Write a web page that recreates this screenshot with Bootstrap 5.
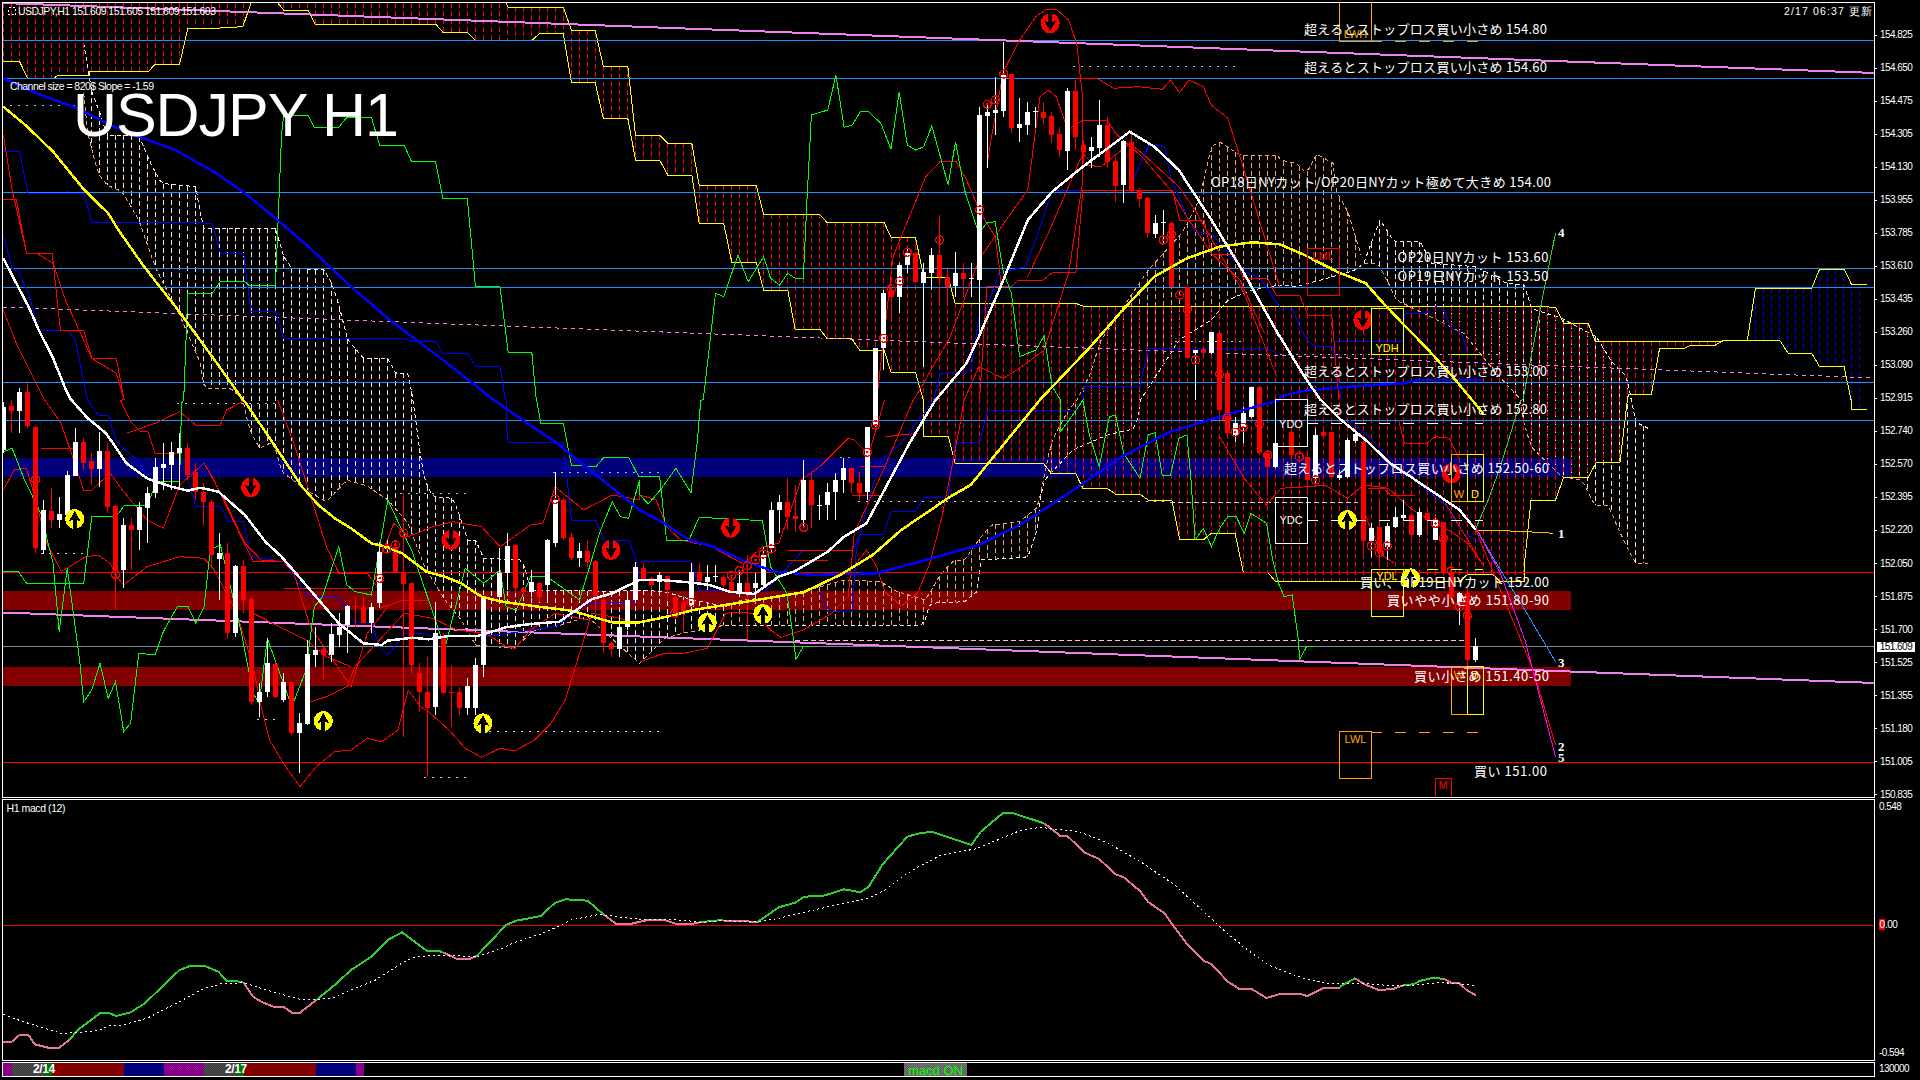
<!DOCTYPE html>
<html lang="ja">
<head>
<meta charset="UTF-8">
<title>USDJPY H1</title>
<link rel="stylesheet" href="https://cdn.jsdelivr.net/npm/bootstrap@5.3.0/dist/css/bootstrap.min.css">
<style>
html, body { height: 1080px; overflow: hidden; background: #000; }
body { margin: 0; font-family: "Liberation Sans", sans-serif; }
.term { width: 1920px; height: 1080px; padding: 2px 0 0 2px; gap: 1px; }
.pane-main { width: 1873px; height: 796px; }
.pane-macd { width: 1873px; height: 262px; }
.pane-bar { width: 1873px; height: 15px; }
.pane-main svg, .pane-macd svg { display: block; shape-rendering: crispEdges; }
.axis-col { width: 45px; font-size: 10px; letter-spacing: -.55px; line-height: 12px; color: #fff; }
.axis-main { height: 772px; margin-top: 27px; margin-bottom: -3px; }
.axis-macd { height: 258px; margin-top: 2px; }
.axis-bar { height: 12px; margin-top: 1px; }
.axis-item { height: 12px; gap: 3px; }
.axis-main .axis-item::before { content: ""; width: 2px; height: 1px; background: #fff; }
.axis-mid { margin-bottom: 10px; }
.zero-mark { background: #f00; padding: 0 .5px; }
.price-tag { left: 2px; top: 613px; width: 38px; height: 10px; background: #fff; color: #000; line-height: 10px; text-align: center; }
.seg { height: 13px; flex: none; }
.seg-purple { background: repeating-conic-gradient(#a000a0 0 25%, #700070 0 50%) 0 0 / 2px 2px; }
.seg-gray { background: repeating-conic-gradient(#505050 0 25%, #383838 0 50%) 0 0 / 2px 2px; }
.seg-green { background: repeating-conic-gradient(#008000 0 25%, #006000 0 50%) 0 0 / 2px 2px; }
.seg-red { background: repeating-conic-gradient(#960000 0 25%, #6e0000 0 50%) 0 0 / 2px 2px; }
.seg-navy { background: repeating-conic-gradient(#00008c 0 25%, #00006a 0 50%) 0 0 / 2px 2px; }
.day-label { top: 0; color: #fff; font-weight: 700; font-size: 12px; line-height: 13px; letter-spacing: -.4px; }
.macd-btn { left: 901px; top: 0; width: 63px; height: 13px; overflow: hidden; color: #0f0; font-size: 13px; line-height: 16px; text-align: center; background: repeating-conic-gradient(#777 0 25%, #5c5c5c 0 50%) 0 0 / 2px 2px; }
.lbl { font-family: "Noto Sans CJK JP", "Liberation Sans", sans-serif; font-size: 13px; fill: #fff; }
.box-lbl { font-family: "Liberation Sans", sans-serif; font-size: 11px; text-anchor: middle; }
.num-lbl { font-family: "Liberation Serif", serif; font-weight: 700; font-size: 13px; fill: #fff; }
.small-lbl { font-family: "Liberation Sans", sans-serif; font-size: 10.5px; fill: #fff; }
</style>
</head>
<body class="bg-black">
<div class="term d-flex flex-column">
  <div class="d-flex align-items-start">
    <div class="pane-main border border-white overflow-hidden">
      <svg id="chart" width="1871" height="794" viewBox="3 3 1871 794" xmlns="http://www.w3.org/2000/svg">
        <defs>
          <pattern id="ditherRed" width="2" height="2" patternUnits="userSpaceOnUse"><rect width="2" height="2" fill="#6e0000"/><rect width="1" height="1" fill="#960000"/><rect x="1" y="1" width="1" height="1" fill="#960000"/></pattern>
          <pattern id="ditherBlue" width="2" height="2" patternUnits="userSpaceOnUse"><rect width="2" height="2" fill="#00006a"/><rect width="1" height="1" fill="#00008c"/><rect x="1" y="1" width="1" height="1" fill="#00008c"/></pattern>
        </defs>
        <g id="geo"></g>
        <g fill="none" stroke-width="1">
          <rect x="1339.5" y="2.5" width="32" height="38.5" stroke="#ffa500"/>
          <rect x="1307.5" y="248.5" width="32" height="46.5" stroke="#f00"/>
          <rect x="1371.5" y="308.5" width="32" height="46" stroke="#ff0"/>
          <rect x="1275.5" y="399.5" width="32" height="46.5" stroke="#fff"/>
          <rect x="1275.5" y="497.5" width="32" height="46" stroke="#fff"/>
          <rect x="1451.5" y="454.5" width="16" height="47" stroke="#ffa500"/>
          <rect x="1467.5" y="454.5" width="16" height="47" stroke="#ff0"/>
          <rect x="1371.5" y="569.5" width="32" height="47" stroke="#ff0"/>
          <rect x="1451.5" y="666.5" width="16" height="47.5" stroke="#ffa500"/>
          <rect x="1467.5" y="666.5" width="16" height="47.5" stroke="#ff0"/>
          <rect x="1339.5" y="731.5" width="32" height="46.5" stroke="#ffa500"/>
          <rect x="1435.5" y="778.5" width="16" height="24" stroke="#f00"/>
          <path d="M1371 41.5H1483" stroke="#ffa500" stroke-dasharray="11 13"/>
          <path d="M1403 354.5H1483" stroke="#ff0" stroke-dasharray="30 18"/>
          <path d="M1307 423.5H1483" stroke="#fff" stroke-dasharray="11 13"/>
          <path d="M1307 520.5H1483" stroke="#fff" stroke-dasharray="11 13"/>
          <path d="M1403 569.5H1483" stroke="#ff0" stroke-dasharray="11 13"/>
          <path d="M1371 732.5H1483" stroke="#ffa500" stroke-dasharray="11 13"/>
        </g>
        <g class="box-lbl">
          <text x="1355.5" y="38" fill="#ffa500">LWH</text>
          <text x="1323" y="260" fill="#f00">LML</text>
          <text x="1387" y="352" fill="#ff0">YDH</text>
          <text x="1291" y="428" fill="#fff">YDO</text>
          <text x="1291" y="524" fill="#fff">YDC</text>
          <text x="1459" y="498" fill="#ffa500">W</text>
          <text x="1475" y="498" fill="#ff0">D</text>
          <text x="1387" y="580" fill="#ff0">YDL</text>
          <text x="1459" y="679" fill="#ffa500">W</text>
          <text x="1475" y="679" fill="#ff0">D</text>
          <text x="1355.5" y="743" fill="#ffa500">LWL</text>
          <text x="1443" y="789" fill="#f00">M</text>
        </g>
        <g class="lbl">
          <text x="1304" y="34" textLength="243">超えるとストップロス買い小さめ 154.80</text>
          <text x="1304" y="72" textLength="243">超えるとストップロス買い小さめ 154.60</text>
          <text x="1211" y="186.5" textLength="340">OP18日NYカット/OP20日NYカット極めて大きめ 154.00</text>
          <text x="1397.5" y="262" textLength="151">OP20日NYカット 153.60</text>
          <text x="1397.5" y="281" textLength="151">OP19日NYカット 153.50</text>
          <text x="1304" y="376" textLength="243">超えるとストップロス買い小さめ 153.00</text>
          <text x="1304" y="414" textLength="243">超えるとストップロス買い小さめ 152.80</text>
          <text x="1284" y="472.5" textLength="265">超えるとストップロス買い小さめ 152.50-60</text>
          <text x="1360" y="586.5" textLength="189">買い、OP19日NYカット 152.00</text>
          <text x="1387" y="605" textLength="162">買いやや小さめ 151.80-90</text>
          <text x="1414" y="681" textLength="135">買い小さめ 151.40-50</text>
          <text x="1474" y="776" textLength="73">買い 151.00</text>
        </g>
        <g class="num-lbl">
          <text x="1558" y="237">4</text>
          <text x="1558" y="538">1</text>
          <text x="1558" y="667">3</text>
          <text x="1558" y="751">2</text>
          <text x="1558" y="762">5</text>
        </g>
        <text class="small-lbl" x="18" y="15" textLength="198">USDJPY,H1  151.609 151.605 151.609 151.603</text>
        <text class="small-lbl" x="10" y="90" textLength="144">Channel size = 820$ Slope = -1.59</text>
        <text x="73" y="136" textLength="326" font-family="Liberation Sans, sans-serif" font-size="61" fill="#fff">USDJPY H1</text>
        <text class="small-lbl" x="1784" y="15" textLength="88" font-size="12">2/17 06:37 更新</text>
      </svg>
    </div>
    <div class="axis-col axis-main d-flex flex-column justify-content-between position-relative">
      <div class="axis-item d-flex align-items-center">154.825</div>
      <div class="axis-item d-flex align-items-center">154.650</div>
      <div class="axis-item d-flex align-items-center">154.475</div>
      <div class="axis-item d-flex align-items-center">154.305</div>
      <div class="axis-item d-flex align-items-center">154.130</div>
      <div class="axis-item d-flex align-items-center">153.955</div>
      <div class="axis-item d-flex align-items-center">153.785</div>
      <div class="axis-item d-flex align-items-center">153.610</div>
      <div class="axis-item d-flex align-items-center">153.435</div>
      <div class="axis-item d-flex align-items-center">153.260</div>
      <div class="axis-item d-flex align-items-center">153.090</div>
      <div class="axis-item d-flex align-items-center">152.915</div>
      <div class="axis-item d-flex align-items-center">152.740</div>
      <div class="axis-item d-flex align-items-center">152.570</div>
      <div class="axis-item d-flex align-items-center">152.395</div>
      <div class="axis-item d-flex align-items-center">152.220</div>
      <div class="axis-item d-flex align-items-center">152.050</div>
      <div class="axis-item d-flex align-items-center">151.875</div>
      <div class="axis-item d-flex align-items-center">151.700</div>
      <div class="axis-item d-flex align-items-center">151.525</div>
      <div class="axis-item d-flex align-items-center">151.355</div>
      <div class="axis-item d-flex align-items-center">151.180</div>
      <div class="axis-item d-flex align-items-center">151.005</div>
      <div class="axis-item d-flex align-items-center">150.835</div>
      <div class="price-tag position-absolute">151.609</div>
    </div>
  </div>
  <div class="d-flex align-items-start">
    <div class="pane-macd border border-white overflow-hidden">
      <svg id="macd" width="1871" height="260" viewBox="3 800 1871 260" xmlns="http://www.w3.org/2000/svg">
        <g id="macdGeo"></g>
        <text class="small-lbl" x="6.5" y="812" textLength="59">H1  macd (12)</text>
      </svg>
    </div>
    <div class="axis-col axis-macd d-flex flex-column justify-content-between ps-1">
      <div class="axis-item d-flex align-items-center">0.548</div>
      <div class="axis-item axis-mid d-flex align-items-center"><span><span class="zero-mark">0</span>.00</span></div>
      <div class="axis-item d-flex align-items-center">-0.594</div>
    </div>
  </div>
  <div class="d-flex align-items-start">
    <div class="pane-bar border border-white overflow-hidden d-flex position-relative">
      <div class="seg seg-purple" style="width:9px"></div>
      <div class="seg seg-gray" style="width:32px"></div>
      <div class="seg seg-green" style="width:8px"></div>
      <div class="seg seg-red" style="width:72px"></div>
      <div class="seg seg-navy" style="width:40px"></div>
      <div class="seg seg-purple" style="width:40px"></div>
      <div class="seg seg-gray" style="width:32px"></div>
      <div class="seg seg-green" style="width:8px"></div>
      <div class="seg seg-red" style="width:72px"></div>
      <div class="seg seg-navy" style="width:40px"></div>
      <div class="seg seg-purple" style="width:8px"></div>
      <span class="day-label position-absolute" style="left:30px">2/14</span>
      <span class="day-label position-absolute" style="left:222px">2/17</span>
      <div class="macd-btn position-absolute">macd ON</div>
    </div>
    <div class="axis-col axis-bar d-flex ps-1"><span>130000</span></div>
  </div>
</div>

<script>
// points are read off the chart crops, each crop has its own origin and scale
const origin = {A:[0,0],B:[640,0],C:[1280,0],D:[0,400],E:[640,400],F:[1280,400],G:[0,780],H:[640,790],I:[1240,790]};
function P(str) {
  let o = [0,0], pts = [];
  str.trim().split(/\s+/).forEach(t => {
    if (t === '|') return;
    if (origin[t]) { o = origin[t]; return; }
    const [x,y] = t.split(',').map(Number);
    pts.push([+(o[0]+x/2.45).toFixed(1), +(o[1]+y/3).toFixed(1)]);
  });
  return pts;
}
function interp(path, x) {
  for (let i = 0; i < path.length-1; i++) {
    const a = path[i], b = path[i+1];
    if (x >= a[0] && x <= b[0]) return b[0] === a[0] ? a[1] : a[1]+(b[1]-a[1])*(x-a[0])/(b[0]-a[0]);
  }
  return null;
}
function clipX(path, x0, x1) {
  const out = [];
  for (let x = Math.max(x0, path[0][0]); x <= Math.min(x1, path[path.length-1][0]); x += 4) {
    const y = interp(path, x);
    if (y !== null) out.push([x, y]);
  }
  return out;
}
let geo = '';
const line = (x1,y1,x2,y2,c,w=1,dash='') => { geo += `<line x1="${x1}" y1="${y1}" x2="${x2}" y2="${y2}" stroke="${c}" stroke-width="${w}"${dash?` stroke-dasharray="${dash}"`:''}/>`; };
const poly = (pts,c,w=1,dash='') => { geo += `<polyline fill="none" points="${pts.map(p=>p.join(',')).join(' ')}" stroke="${c}" stroke-width="${w}"${dash?` stroke-dasharray="${dash}"`:''}/>`; };

// price bands
[[458,19,'ditherBlue'],[591,19,'ditherRed'],[667,19,'ditherRed']].forEach(b => {
  geo += `<rect x="3" y="${b[0]}" width="1568" height="${b[1]}" fill="url(#${b[2]})"/>`;
});

// higher timeframe cloud
const cloudTop = P(`A 205,130 225,275 245,340 262,405 340,405 365,480 395,550 480,560 497,685 675,685 695,770 715,805 795,810 815,855 835,935 850,1015 890,1075 950,1075 970,1120 1000,1120 1012,1200 | D 1012,1 1030,165 1040,240 1060,290 1110,295 1130,360 1145,420 1165,420 1185,475 1280,480 1300,570 1400,570 1500,575 1567,570 | E 60,575 130,600 210,620 250,600 340,590 400,575 500,540 590,545 630,575 700,600 735,525 770,480 795,480 830,420 860,375 930,365 975,320 1000,170 1010,120 1050,30 1070,1 | B 1071,1200 1100,1130 1130,1020 1245,810 1290,750 1330,695 1370,600 1400,440 1420,425 1470,465 1567,465 | C 0,480 40,490 65,520 90,462 130,490 140,580 165,630 185,710 205,790 245,660 280,725 345,725 370,790 480,800 555,850 600,855 615,925 690,955 775,1010 815,1090 850,1130 860,1195 | F 861,1 870,65 910,90`);
const cloudBot = P(`A 205,280 215,400 240,520 262,555 300,575 340,660 380,800 400,850 440,945 495,1100 500,1165 565,1165 595,1199 | D 610,85 635,145 670,125 690,215 750,270 800,305 850,240 900,258 950,300 1000,370 1040,500 1090,600 1130,660 1165,735 1260,745 1310,690 1360,680 1440,650 1530,750 1567,790 | E 0,790 60,715 105,700 210,675 695,675 710,610 795,605 830,570 831,480 950,472 975,380 985,250 1010,215 1060,150 1145,105 1215,85 1224,1 | B 1226,1200 1290,1080 1320,1020 1400,960 1440,900 1500,870 1567,855 | C 0,855 40,860 70,850 130,830 185,810 205,790 240,790 270,860 285,900 450,1000 530,1120 590,1199 | F 591,40 615,140 690,230 740,240 770,315 805,318 830,390 870,490 910,490`);
const crossA = 725, crossB = 1364;
for (let p = 83; p < 1652; p += 8) {
  const t = interp(cloudTop, p+.5), b = interp(cloudBot, p+.5);
  if (t === null || b === null || b-t < 2) continue;
  line(p+.5, t, p+.5, b, (p < crossA || p >= crossB) ? '#ffe4e1' : '#f4a460', 1, '5 3');
}
poly(clipX(cloudTop,0,crossA),'#ffe4e1',1,'4 3');
poly(clipX(cloudBot,0,crossA),'#f4a460',1,'4 3');
poly(clipX(cloudTop,crossA,crossB),'#f4a460',1,'4 3');
poly(clipX(cloudBot,crossA,crossB),'#ffe4e1',1,'4 3');
poly(clipX(cloudTop,crossB,1700),'#ffe4e1',1,'4 3');
poly(clipX(cloudBot,crossB,1700),'#f4a460',1,'4 3');

// main ichimoku cloud
const spanA = P(`A 8,185 48,185 68,235 130,235 145,225 220,225 220,213 365,213 380,193 440,193 460,85 525,85 595,80 615,8 625,-15 670,-15 680,8 695,30 755,30 772,72 1067,72 1085,97 1145,97 1165,122 1303,122 1322,100 1380,100 1400,247 1458,247 1478,355 1538,355 1557,480 1567,480 | B 0,480 48,480 68,525 127,525 145,670 205,670 225,787 285,787 303,870 362,870 380,987 440,987 458,1015 518,1015 538,1050 598,1050 615,1117 675,1117 694,1199 | E 695,1 695,108 755,108 772,190 988,190 1008,220 1067,220 1085,265 1145,265 1165,283 1225,283 1245,300 1303,300 1322,418 1382,418 1400,400 1458,400 1478,517 1538,517 1557,545 1567,545 | F 0,545 190,545 440,545 460,522 520,522 540,545 598,545 599,490 615,300 675,300 695,232 755,232 775,187 833,187 851,1 | C 852,1199 853,1183 910,1183 930,1045 990,1045 1008,1035 1067,1035 1085,1022 1145,1022 1165,865 1303,865 1322,807 1382,807 1400,853 1438,853`);
const spanB = P(`A 8,0 1225,0 1240,8 1245,22 1380,22 1400,90 1458,90 1478,198 1538,198 1557,405 1567,405 | B 0,405 48,405 68,430 127,430 145,556 285,556 303,643 440,643 458,667 598,667 615,712 675,712 695,832 755,832 772,910 1067,910 1085,918 1567,918 | C 0,918 610,918 675,922 695,970 755,970 772,1023 1085,1023 1145,1022 1225,1022 1245,1060 1303,1060 1322,1100 1382,1100 1399,1199 | F 1400,0 1400,28 1438,28`);
const flip = 1280+1145/2.45;
for (let p = 3; p < 1870; p += 8) {
  const a = interp(spanA, p+.5), b = interp(spanB, p+.5);
  if (a === null || b === null) continue;
  const t = Math.max(Math.min(a,b),3), e = Math.max(a,b);
  if (e-t < 2) continue;
  line(p+.5, t, p+.5, e, p+.5 < flip ? '#f00' : '#00f', 1, '5 3');
}
poly(spanA,'#ff0'); poly(spanB,'#ff0');

// levels
[40.5,78.5,192.5,268.5,287.5,382.5,420.5].forEach(y => line(3,y,1874,y,'#1e90ff'));
[572.5,762.5].forEach(y => line(3,y,1874,y,'#f00'));
line(3,646.5,1874,646.5,'#778899');
line(3,612.5,1875,683,'#ee82ee',2);
line(3,3,1875,73,'#ee82ee',2);
line(3,307,1875,378,'#ee82ee',1,'4 4');
[[10,75,105.5,'#87ceeb'],[1073,1235,66.5,'#87ceeb'],[177,277,403.5,'#87ceeb'],[553,660,472.5,'#87ceeb'],[400,467,493.5,'#87ceeb'],[1280,1504,354.5,'#87ceeb'],[840,852,457.5,'#87ceeb'],
 [41,86,553.5,'#ffc0cb'],[257,276,719.5,'#ffc0cb'],[481,660,731.5,'#ffc0cb'],[424,467,777.5,'#ffc0cb'],[858,1170,501.5,'#ffc0cb'],[1170,1358,502.5,'#ffc0cb'],[795,1464,640.5,'#ffc0cb'],[1175,1244,341.5,'#ffc0cb']
].forEach(d => line(d[0],d[2],d[1],d[2],d[3],1,d[0]===795||d[0]===1170?'5 3':'2 6'));

// thin step and band lines
const blues = [
 `A 8,455 48,455 68,580 205,580 225,667 450,667 520,670 540,760 597,760 615,935 675,935 695,1015 990,1015 1010,1025 1067,1025 1085,1060 1145,1060 1165,1100 1225,1100 1238,1199 | D 1240,1 1243,127 1380,127 1400,360 1460,360 1480,420 1540,420 1560,485 1567,540`,
 `A 8,705 30,805 45,815 70,880 95,990 165,990 185,1020 214,1199 | D 215,1 240,45 265,45 285,125 340,185 360,235 440,235 460,240 480,320 540,320 560,365 597,365 615,470 695,485 715,520 755,590 830,590 852,640 870,665 910,670 930,740 950,765 970,735 990,700 1040,700 1060,710 1200,708 1360,680 1440,610 1560,605`,
 `E 0,485 125,485 145,570 200,570 240,580 305,575 340,530 400,450 520,450 540,403 597,403 615,335 675,335 695,293 755,293 772,127 832,127 852,30 1067,30 1084,1 | B 1085,1199 1090,1160 1225,1160 1245,1045 1535,1045 1560,1060`,
 `E 440,575 460,635 520,635 530,450 560,300 590,180 640,130 719,1 | B 720,1199 735,1120 810,1115 832,940 850,925 880,818 945,800 975,700 1010,572 1085,572`,
 `B 1200,570 1225,490 1250,430 1285,440 1300,530 1340,650 1360,695 1400,700 1480,815 1520,835 1567,920 | C 0,928 30,925 50,985 70,1025 90,1040 130,1040 150,1199`,
 `C 130,1025 300,1025 305,940 360,940 380,920 400,925 420,985 445,1000 460,1060`,
 `F 170,60 230,125 290,200 330,240 400,310 450,400 490,425`
];
blues.forEach(s => poly(P(s),'#00f'));
const reds = [
 `A 8,597 40,597 65,760 128,760 148,990 205,990 225,1075 285,1075 304,1199 | D 295,1 320,65 345,95 362,95 380,160 440,160`,
 `A 8,405 30,570 65,760 90,760 130,790 160,900 190,980 225,1075 285,1120 304,1199`,
 `A 8,930 40,1030 80,1130 109,1199 | D 110,1 150,70 205,270 225,270 270,220 300,270 360,360 400,385 440,255 500,190 550,300 600,430 640,480 695,485`,
 `D 8,270 35,210 65,205 85,290 115,430 150,515 210,470 240,465 270,490 283,525 303,555 360,500 440,470 500,475 525,510 550,570 580,640 620,800 640,920 660,1020 700,1100 735,1160 775,1100 820,1055 860,1050 900,1015 935,1025 975,990 1000,870 1030,920 1050,935 1100,990 1140,1045 1180,1072 1225,1045 1260,1053 1310,1020 1350,970 1385,900 1420,760 1450,640 1500,650 1567,670`,
 `D 310,100 380,70 440,35 480,75 540,75 555,30 595,5`,
 `D 100,145 185,145`, `D 500,190 520,230 620,485 695,485 720,520 760,680 860,860 900,700 950,620`,
 `D 680,0 720,130 800,440 830,520 900,520 930,570`, `D 695,565 910,565`, `D 930,625 990,600 1050,600`, `D 620,640 750,720 800,770 860,800`,
 `D 750,910 800,890 850,860 870,800 930,720 990,640 1060,655 1120,690 1190,700 1240,740 1262,745 1300,690 1360,640 1440,660`,
 `D 930,480 965,370 1000,410 1060,380 1110,365 1180,380 1225,440 1300,375 1330,370 1360,260 1430,330 1500,285 1567,300 | E 0,285 40,300 65,380 100,420 175,440 250,490`,
 `E 265,480 300,440 340,430 395,240 440,200 510,115 525,120 560,165 599,1`, `E 600,110 680,100`, `E 540,200 600,200`, `E 360,450 520,450`, `E 360,480 460,480`, `E 520,285 600,285`,
 `E 520,505 555,450 580,500 600,575 640,618 680,580 710,490 740,350 780,100 794,1`,
 `E 0,785 60,760 100,762 165,745 210,640 240,637 280,640 320,690 345,712 400,690 470,640 510,590 525,400 600,200 669,1`,
 `E 1420,110 1480,235 1535,315 1567,270`,
 `B 670,1199 680,1180 760,1010 830,780 900,655 950,570 980,290 1000,270 1020,290 1048,390 1085,360 1145,360 1165,400 1230,470 1300,570 1340,650 1400,760 1470,840 1530,1000`,
 `B 580,1199 620,770 650,680 700,530 735,485 775,485 800,540 835,640 870,710 880,800 885,860`,
 `B 832,1199 850,860 910,860 925,842 985,842 1010,818 1068,818 1085,572 1305,572 1322,660 1382,660 1400,762 1458,765 1478,835 1538,835 1558,885 1567,885 | C 0,885 48,885 68,945 127,945 144,1199`,
 `B 795,1199 830,1100 890,1135 930,1105 990,1050 1050,820 1085,540 1085,300 1070,130 1050,60 1020,28 995,28 970,50 930,120 890,215 860,420 850,500`,
 `B 1068,235 1120,235 1160,265 1220,260 1280,268 1300,240 1322,278 1345,240 1380,260 1400,315 1440,355 1470,470 1500,590 1567,860`,
 `B 1090,495 1130,500 1200,430 1240,470 1320,560 1360,630 1420,760 1480,880 1560,1130`,
 `B 950,830 1000,700 1085,460 1100,480`,
 `F 0,265 70,260 110,255 165,295 205,255 265,265 325,330 380,370 420,395 460,430 500,500`,
 `F 290,60 305,130 360,130 380,110 415,115 440,180`, `F 215,265 255,265 270,285 330,285`, `F 405,310 450,400 500,500`, `F 205,330 220,380 250,465 280,490`
];
reds.forEach(s => poly(P(s),'#f00'));
const greenStep = `D 8,515 45,515 65,550 205,550 225,350 285,350 305,315 360,315 385,245 440,245 445,10 | A 450,1199 460,880 520,880 540,845 600,845 610,856 675,856 690,400 695,345 755,345 770,382 830,382 850,352 910,352 930,435 990,435 1008,484 1067,484 1085,595 1145,595 1165,860 1225,860 1245,1057 1303,1057 1314,1199 | D 1315,1 1325,70 1380,70 1400,195 1460,200 1480,172 1540,172 1565,230 | E 0,228 48,228 65,420 120,420 145,352 300,362 320,500 360,580 375,710 382,778 400,740 420,740`;
const greenJag = `D 8,155 30,145 60,240 100,340 130,490 145,695 165,505 195,780 205,905 225,870 245,790 265,895 283,845 303,995 320,970 340,760 380,765 400,695 435,618 460,618 480,670 500,620 515,450 540,435 590,690 620,880 635,910 655,715 715,920 750,810 770,620 790,590 830,440 850,555 870,575 910,585 950,300 1010,455 1090,745 1140,505 1185,550 1225,510 1240,620 1265,630 1300,530 1340,530 1420,600 1470,395 1500,305 1520,350 1540,355 1567,240 | E 0,285 20,312 50,270 88,205 125,278 140,130 149,1 | B 155,1199 185,880 205,890 240,765 265,845 303,770 320,835 342,855 362,820 380,835 400,835 410,580 420,345 460,330 480,225 500,382 520,375 540,335 560,335 590,370 615,447 635,275 655,435 675,450 695,440 715,378 755,555 773,425 795,570 830,700 850,668 870,665 890,815 910,880 930,1070 970,1050 990,1008 1010,1160 1030,1199 | E 1030,95 1060,45 1085,1 1100,100 1125,200 1150,50 1165,45 1185,160 1225,235 1245,105 1262,98 1280,228 1300,225 1320,115 1340,105 1350,240 1360,420 1380,385 1400,440 1420,385 1440,350 1460,348 1480,400 1497,340 1535,370 1550,480 1567,560 | F 0,560 10,590 30,585 45,720 48,778 65,740 85,738`;
poly(P(greenStep),'#0f0'); poly(P(greenJag),'#0f0');

// candles, [x in crop, colour, body top, body bottom, high, low]
const candles = {
 D:[[10,'w',20,150,5,160],[28,'r',18,33,0,100],[47,'w',-25,33,-37,100],[67,'r',-25,78,-57,85],[87,'r',82,445,82,460],[107,'w',330,450,300,462],[127,'r',333,360,265,385],[146,'w',342,360,290,385],[166,'w',225,345,212,350],[185,'w',125,228,85,225],[205,'r',125,190,115,210],[224,'r',183,207,160,255],[244,'w',153,207,95,260],[264,'r',152,320,130,340],[283,'r',318,512,315,630],[303,'w',375,510,355,565],[322,'r',375,390,355,510],[342,'w',320,390,305,450],[361,'w',280,323,260,430],[381,'w',202,280,175,295],[401,'w',192,205,130,270],[420,'w',155,195,125,270],[440,'w',145,160,100,270],[460,'r',145,225,130,235],[479,'r',215,275,190,300],[499,'r',275,307,250,375],[518,'r',307,465,300,500],[538,'w',460,477,400,600],[557,'r',460,700,430,718],[577,'w',497,698,495,710],[597,'r',497,600,480,640],[616,'r',598,905,590,915],[636,'w',875,905,850,950],[655,'w',790,877,715,890],[675,'r',793,892,785,895],[695,'w',845,900,820,905],[714,'r',845,1000,845,1005],[734,'w',970,1000,940,1118],[753,'w',763,972,720,975],[773,'w',750,765,680,800],[793,'r',748,765,735,840],[812,'w',702,765,670,785],[832,'w',680,705,640,740],[851,'w',617,675,615,760],[871,'r',617,622,590,680],[891,'r',622,668,590,670],[910,'w',620,670,610,700],[930,'w',455,610,425,625],[949,'w',440,448,420,460],[969,'r',440,515,425,515],[989,'r',518,552,280,1010],[1008,'r',550,795,550,820],[1028,'r',820,875,790,935],[1047,'r',875,925,770,1130],[1067,'w',700,920,605,945],[1087,'r',710,880,700,880],[1106,'r',875,878,795,980],[1126,'r',875,925,860,945],[1145,'w',858,925,835,945],[1165,'w',795,925,775,945],[1185,'w',590,795,590,832],[1224,'w',518,590,445,600],[1243,'w',437,518,400,570],[1263,'r',435,565,435,580],[1283,'r',565,577,560,590],[1302,'w',547,575,510,590],[1322,'r',548,590,545,605],[1341,'w',420,555,417,610],[1361,'w',300,430,215,440],[1380,'r',300,415,295,420],[1400,'r',410,475,400,480],[1420,'w',452,475,430,500],[1439,'r',452,485,420,500],[1459,'r',483,600,480,640],[1479,'r',600,730,590,760],[1498,'r',730,748,725,770],[1518,'w',680,748,650,770],[1537,'w',600,680,575,690],[1557,'w',500,600,485,605]],
 E:[[8,'r',505,540,490,545],[28,'r',535,555,530,570],[47,'w',525,545,515,580],[67,'r',528,570,525,600],[87,'r',590,640,585,650],[106,'r',605,635,600,700],[126,'w',515,620,490,630],[145,'r',515,543,490,550],[165,'w',530,545,495,570],[184,'w',527,532,495,545],[204,'r',530,555,525,560],[224,'r',545,575,530,580],[243,'w',550,575,510,590],[263,'r',548,575,465,720],[282,'w',550,565,520,600],[302,'w',465,555,440,565],[322,'w',330,445,305,460],[342,'w',307,330,285,400],[361,'r',307,350,235,390],[381,'r',347,357,255,395],[401,'w',240,360,180,380],[420,'r',240,315,215,385],[440,'w',314,316,285,360],[459,'w',275,315,250,360],[479,'w',240,275,220,360],[498,'w',205,240,175,280],[518,'r',205,248,200,280],[538,'r',248,280,215,300],[557,'w',82,275,82,300],[577,'w',-155,75,-155,80],[1420,'r',-200,30,-200,30],[1438,'r',-80,100,-80,110],[1458,'w',70,105,50,125],[1478,'w',40,80,20,130],[1497,'w',-40,50,-40,55],[1517,'r',-40,158,-40,165],[1537,'r',158,200,150,270],[1557,'w',130,200,125,205]],
 B:[[597,'w',880,1045,870,1110],[616,'r',870,890,860,950],[636,'w',795,890,790,940],[655,'w',760,795,745,820],[675,'r',760,845,755,850],[695,'w',815,850,790,1100],[714,'w',765,820,745,870],[734,'r',765,830,645,910],[753,'r',830,860,800,910],[773,'w',820,858,755,890],[793,'r',820,837,790,890],[812,'w',833,835,790,890],[832,'w',345,840,320,1010],[851,'w',335,347,315,505],[871,'w',330,340,230,405],[891,'w',225,332,125,350],[910,'r',222,385,222,400],[930,'w',372,384,295,425],[949,'w',337,375,305,405],[969,'w',333,337,320,385],[989,'r',335,355,305,375],[1008,'r',348,405,335,430],[1028,'r',403,450,380,470],[1047,'w',273,453,265,510],[1067,'r',273,410,240,450],[1087,'r',435,455,420,490],[1106,'w',440,452,410,505],[1126,'w',375,445,300,470],[1145,'r',375,487,350,505],[1165,'r',483,558,470,605],[1185,'w',422,555,420,610],[1204,'r',425,570,390,575],[1224,'r',570,598,565,620],[1243,'r',595,700,590,715],[1263,'w',670,702,645,715],[1283,'w',665,670,630,730],[1302,'r',668,860,665,862],[1341,'r',860,1075,855,1075],[1361,'w',1050,1060,1050,1200],[1380,'r',1048,1060,1045,1065],[1400,'w',997,1060,995,1062]],
 F:[[28,'r',95,165,80,190],[67,'r',170,240,165,285],[87,'w',105,235,85,250],[106,'r',97,108,85,115],[126,'r',97,230,95,235],[145,'w',225,235,210,240],[165,'w',120,230,115,235],[185,'w',103,122,95,130],[204,'r',127,423,120,465],[224,'w',383,423,370,470],[243,'r',382,455,305,490],[263,'w',378,440,370,480],[283,'w',352,380,322,385],[302,'w',345,355,300,360],[322,'r',345,405,340,410],[341,'w',337,405,325,410],[361,'r',340,360,320,400],[381,'w',360,420,355,420],[400,'r',367,520,365,525],[420,'r',520,590,505,610],[440,'w',580,610,575,675],[459,'r',580,780,560,800],[479,'w',738,780,715,785]]
};
function drawCandles() {
  Object.keys(candles).forEach(sec => {
    const [ox,oy] = origin[sec];
    candles[sec].forEach(([zx,c,t,b,h,l]) => {
      const k = Math.round((ox+zx/2.45-3.5)/8), px = 3+8*k, col = c==='w' ? '#fff' : '#f00';
      const Y = v => Math.round(oy+v/3);
      geo += `<rect x="${px}" y="${Y(h)}" width="1" height="${Math.max(Y(l)-Y(h),1)}" fill="${col}"/>`;
      geo += `<rect x="${px-2}" y="${Y(t)}" width="5" height="${Math.max(Y(b)-Y(t),1)}" fill="${col}"/>`;
    });
  });
}
drawCandles();

// moving averages and forecast lines
const yellowMa = `A 8,320 65,378 130,455 205,568 265,640 290,690 350,795 385,850 430,920 460,970 520,1070 595,1199 | D 600,5 680,150 740,260 780,315 820,355 860,385 910,430 945,440 985,460 1045,515 1090,530 1130,550 1180,590 1230,605 1320,620 1400,632 1500,667 1567,667 | E 0,667 85,645 130,630 260,605 400,577 490,525 570,465 640,390 760,290 810,255 860,180 979,1 | B 980,1199 1100,1045 1190,920 1260,830 1340,775 1420,740 1500,727 1567,733 | C 0,733 60,765 140,815 210,850 250,905 300,970 360,1045 430,1140 470,1199 | F 471,0 500,45`;
const blueMa = `A 8,235 100,285 190,325 270,375 340,410 430,450 530,520 600,580 680,660 760,745 860,860 960,965 1080,1075 1209,1199 | D 1210,0 1280,60 1360,125 1440,205 1567,330 | E 0,330 60,370 120,420 180,440 250,480 330,515 430,525 580,520 700,480 830,435 930,375 1000,320 1080,255 1180,170 1300,95 1420,50 1567,0 | C 0,1190 60,1172 170,1160 300,1150 340,1140 498,1140`;
const whiteMa = `A 8,775 40,850 70,920 95,990 130,1075 160,1165 174,1199 | D 175,0 215,55 260,100 310,190 360,235 420,260 460,272 490,263 535,275 600,345 650,425 690,470 760,570 830,670 890,730 935,735 950,722 1010,713 1050,718 1100,708 1170,708 1240,682 1300,672 1370,665 1450,598 1500,580 1567,540 | E 0,540 50,540 130,548 170,555 220,575 280,582 340,530 380,513 460,455 500,410 555,370 590,290 660,130 724,0 | B 725,1199 800,1090 830,1010 880,870 950,660 1010,575 1080,505 1200,395 1260,440 1320,510 1400,660 1480,820 1567,1010 | C 0,1010 60,1130 99,1199 | F 100,0 150,60 210,120 270,190 320,230 380,280 440,330 480,390`;
poly(P(blueMa),'#00f',2.5); poly(P(yellowMa),'#ff0',2.5); poly(P(whiteMa),'#fff',2.5);
poly(P(`F 480,390 545,392 605,395 670,400`),'#ffc000');
poly(P(`F 480,385 510,300 540,200 580,40 589,1 | C 595,1199 620,1040 650,850 675,700`),'#32cd32');
poly(P(`F 480,385 540,510 600,630 675,785`),'#1e90ff');
poly(P(`F 480,390 520,510 620,810 675,1035`),'#f00');
poly(P(`F 480,385 540,520 600,720 675,1070`),'#f0f');

// signal rings
const rings = `D 87,238 283,523 930,535 948,447 969,435 989,400 1360,298 | E 85,640 125,607 224,527 243,512 263,497 283,480 302,462 322,447 401,382 557,157 577,75 1438,55 1458,97 1478,82 1518,72 1538,165 | B 597,1015 616,867 636,843 655,757 734,720 832,630 851,313 871,300 891,222 1282,720 1302,703 1322,885 1341,928 1361,1080 1420,1122 | F 47,170 87,240 224,438 243,458 263,438 381,370 400,415 420,513 440,620 459,647`;
P(rings).forEach(([x,y]) => {
  geo += `<circle cx="${x}" cy="${y}" r="4" fill="none" stroke="#f00" stroke-width="1.4"/><circle cx="${x}" cy="${y}" r="1.2" fill="#f00"/>`;
});

// trade arrows: round blob with the arrow cut out in black
function arrow(x,y,col,down) {
  const s = down ? 1 : -1;
  geo += `<g transform="translate(${x} ${y}) scale(1 ${s})"><ellipse rx="9.5" ry="10" fill="${col}"/><path d="M-2 -11H2V-1L6 -2.5L0 8L-6 -2.5L-2 -1Z" fill="#000"/></g>`;
}
P(`B 1005,70 | D 614,262 1105,420 1497,450 | E 222,383 | C 203,960 | F 420,220`).forEach(p => arrow(p[0],p[1],'#f00',true));
P(`D 183,357 792,963 1183,970 | E 165,668 301,642 | F 165,360 320,535`).forEach(p => arrow(p[0],p[1],'#ff0',false));

// small window glyph next to the symbol name
geo += `<rect x="8.5" y="7.5" width="7" height="7" fill="none" stroke="#fff" stroke-dasharray="2 2"/>`;
document.getElementById('geo').innerHTML = geo;

// macd pane
geo = '';
line(3,925.5,1874,925.5,'#e00000');
const pink = '#e7749b', lime = '#32cd32';
[[pink,`G 8,786 28,786 48,765 70,765 85,793 118,803 145,803 170,780`],
 [lime,`G 170,780 190,750 245,700 265,698 285,708 320,697 355,670 410,605 440,570 465,558 500,557 535,575 555,602 575,602 597,608`],
 [pink,`G 597,608 620,650 640,665 670,680 695,680 715,698 735,698 775,660`],
 [lime,`G 775,660 820,615 860,570 910,530 950,480 985,457 1010,480 1045,512 1075,512 1090,520`],
 [pink,`G 1090,520 1120,537 1150,537 1168,528`],
 [lime,`G 1168,528 1240,435 1265,422 1325,408 1360,368 1385,358 1440,362 1478,403`],
 [pink,`G 1478,403 1510,432 1545,432 1567,425 | H 0,395 20,390 60,390 90,402 125,402 147,397`],
 [lime,`H 147,397 200,390 205,392`],[pink,`H 205,392 245,393 288,396`],
 [lime,`H 288,396 340,352 380,338 402,320 450,317 500,298 540,307 560,290 595,222 655,140 680,131 715,125 812,165 835,125 890,68 910,68 990,100`],
 [pink,`H 990,100 1030,138 1047,138 1090,188 1125,207 1165,253 1185,262 1225,303 1245,336 1285,370 1305,405 1340,462 1380,512 1400,522 1440,575 1470,598 | I 30,598 65,624 100,611 145,611 165,618 205,594 245,594`],
 [lime,`I 245,590 282,565`],[pink,`I 282,565 305,583 340,600 375,597 402,585`],[lime,`I 402,585 425,583 440,573 470,564 498,566`],[pink,`I 498,566 520,580 538,580 555,600 578,616`]
].forEach(m => poly(P(m[1]),m[0],2));
poly(P(`G 8,703 50,722 90,738 150,760 190,758 245,750 265,738 300,735 360,715 400,690 440,665 500,625 540,612 597,608 640,625 680,640 735,658 775,660 820,652 870,625 920,600 990,545 1020,530 1085,525 1168,530 1230,505 1265,485 1330,460 1380,432 1400,420 1470,403 1520,412 1567,417 | H 0,390 60,388 115,392 150,397 205,392 288,396 340,385 400,367 500,340 560,325 600,300 650,255 680,232 735,197 820,177 880,148 930,122 980,112 1075,125 1145,158 1230,218 1310,285 1390,375 1440,432 1470,460 | I 0,463 30,490 70,525 120,550 165,568 215,580 300,580 370,587 420,586 485,578 530,580 578,587`),'#fff',1,'2 3');
document.getElementById('macdGeo').innerHTML = geo;
</script>
<script src="https://cdn.jsdelivr.net/npm/bootstrap@5.3.0/dist/js/bootstrap.bundle.min.js"></script>
</body>
</html>
